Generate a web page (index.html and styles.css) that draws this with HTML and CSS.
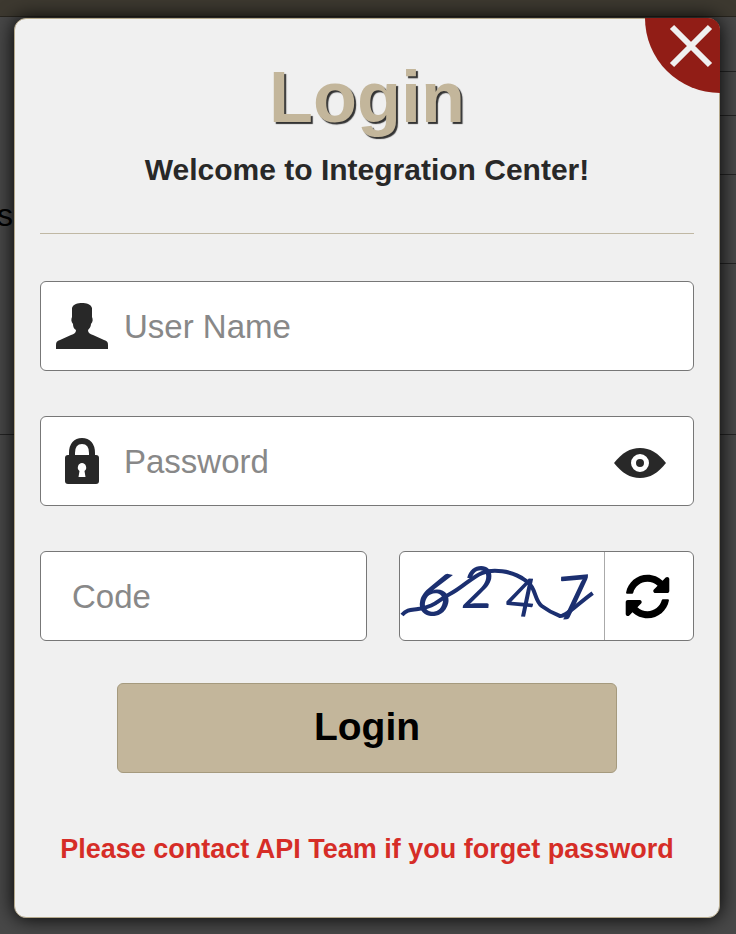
FILE: index.html
```html
<!DOCTYPE html>
<html lang="en">
<head>
<meta charset="utf-8">
<meta name="viewport" content="width=device-width, initial-scale=1">
<title>Login</title>
<link rel="stylesheet" href="styles.css">
</head>
<body>
<div class="page" aria-hidden="true">
  <div class="page-bar"></div>
  <div class="page-body">
    <div class="page-text">s</div>
    <div class="page-rows">
      <div class="row row-title"></div>
      <div class="row row-short"></div>
      <div class="row row-mid"></div>
      <div class="row row-tall"></div>
    </div>
  </div>
</div>
<main class="modal" role="dialog" aria-labelledby="title">
  <button class="close" type="button" aria-label="Close">
    <svg viewBox="0 0 75 75"><path d="M27 9 65 47M65 9 27 47" fill="none" stroke="#f0f0f0" stroke-width="6"/></svg>
  </button>
  <h1 class="title" id="title">Login</h1>
  <p class="welcome">Welcome to Integration Center!</p>
  <hr class="rule">
  <form class="form">
    <div class="field">
      <label class="icon" for="user">
        <svg width="52" height="46" viewBox="0 0 52 46" role="img" aria-label="User Name"><path fill="#282828" d="M26 0c4 0 9 1 10 5v9c1 2 1 5-1 7 0 3-2 5-3 6 0 3 2 4 5 5l11 5c3 1 4 2 4 5v4H0v-4c0-3 1-4 4-5l11-5c3-1 5-2 5-5-2-1-3-3-3-6-2-2-2-5-1-7V5c1-4 6-5 10-5z"/></svg>
      </label>
      <input class="input" id="user" type="text" placeholder="User Name">
    </div>
    <div class="field">
      <label class="icon" for="password">
        <svg width="34" height="46" viewBox="0 0 34 46" role="img" aria-label="Password"><path d="M7 19v-4C7 7 11 3 17 3s10 4 10 12v4" fill="none" stroke="#282828" stroke-width="6"/><rect y="17" width="34" height="29" rx="3" fill="#282828"/><path d="M17 25a4.500 4.500 0 0 1 2.500 8l1 6h-7l1-6A4.500 4.500 0 0 1 17 25z" fill="#fff"/></svg>
      </label>
      <input class="input" id="password" type="password" placeholder="Password">
      <button class="eye" type="button" aria-label="Show password">
        <svg width="52" height="30" viewBox="0 0 52 30"><path d="M0 15C8 5 16 0 26 0s18 5 26 15C44 25 36 30 26 30S8 25 0 15z" fill="#282828"/><circle cx="26" cy="15" r="6.500" fill="#282828" stroke="#fff" stroke-width="5"/></svg>
      </button>
    </div>
    <div class="code-row">
      <div class="field field-code">
        <input class="input" type="text" placeholder="Code" aria-label="Code">
      </div>
      <div class="field captcha">
        <svg class="captcha-image" viewBox="0 0 204 88" role="img" aria-label="6247">
          <g class="digits">
            <text x="14" y="60" font-size="62" rotate="12">6</text>
            <text x="61" y="56" font-size="58" rotate="0">2</text>
            <text x="104" y="63" font-size="54" rotate="5">4</text>
            <text x="158" y="68" font-size="60" rotate="-5">7</text>
          </g>
          <path d="M2 63C7 57 12 58 18 57C35 55 38 48 50 42C62 36 72 25 82 21C92 17 112 18 125 28C137 35 134 48 142 54Q150 60 160 64C166 65 179 51 193 41" fill="none" stroke="#1b2f70" stroke-width="4"/>
        </svg>
        <button class="refresh" type="button" aria-label="Refresh code">
          <svg width="45" height="45" viewBox="0 0 512 512"><path d="M370.720 133.280C339.458 104.008 298.888 87.962 255.848 88c-77.458.068-144.328 53.178-162.791 126.850-1.344 5.363-6.122 9.150-11.651 9.150H24.103c-7.498 0-13.194-6.807-11.807-14.176C33.933 94.924 134.813 8 256 8c66.448 0 126.791 26.136 171.315 68.685L463.030 40.970C478.149 25.851 504 36.559 504 57.941V192c0 13.255-10.745 24-24 24H345.941c-21.382 0-32.090-25.851-16.971-40.971l41.750-41.749zM32 296h134.059c21.382 0 32.090 25.851 16.971 40.971l-41.750 41.750c31.262 29.273 71.835 45.319 114.876 45.280 77.418-.07 144.315-53.144 162.787-126.849 1.344-5.363 6.122-9.150 11.651-9.150h57.304c7.498 0 13.194 6.807 11.807 14.176C478.067 417.076 377.187 504 256 504c-66.448 0-126.791-26.136-171.315-68.685L48.970 471.030C33.851 486.149 8 475.441 8 454.059V320c0-13.255 10.745-24 24-24z"/></svg>
        </button>
      </div>
    </div>
    <button class="submit" type="submit">Login</button>
  </form>
  <p class="notice">Please contact API Team if you forget password</p>
</main>
</body>
</html>
```
FILE: styles.css
```css
* {
  box-sizing: border-box;
}

body {
  display: grid;
  grid-template-columns: minmax(0, 1fr);
  min-height: 100vh;
  margin: 0;
  background: #484848;
  font-family: "Liberation Sans", Arial, sans-serif;
}

.page,
.modal {
  grid-area: 1 / 1;
}

.page-bar {
  height: 17px;
  background: #3d3930;
  border-bottom: 1px solid #28251e;
}

.page-body {
  display: flex;
  justify-content: space-between;
  height: 418px;
  border-bottom: 1px solid #242424;
}

.page-text {
  display: flex;
  justify-content: flex-end;
  width: 13px;
  padding-top: 180px;
  font-size: 32px;
  line-height: 36px;
}

.page-rows {
  width: 50%;
}

.row {
  border-bottom: 1px solid #242424;
}

.row-title {
  height: 55px;
}

.row-short {
  height: 44px;
}

.row-mid {
  height: 59px;
}

.row-tall {
  height: 89px;
}

.modal {
  position: relative;
  align-self: start;
  margin: 18px 16px 16px 14px;
  padding: 41px 25px 50px;
  background: #f0f0f0;
  border: 1px solid #b5a98c;
  border-radius: 12px;
  box-shadow: 0 0 20px #000;
  text-align: center;
}

.close {
  position: absolute;
  top: -1px;
  right: -1px;
  width: 75px;
  height: 75px;
  padding: 0;
  background: #911d16;
  border: 0;
  border-radius: 0 12px 0 75px;
}

.close svg {
  display: block;
}

.title {
  margin: 0;
  color: #c3b69b;
  font-size: 72px;
  line-height: 74px;
  text-shadow: 2px 2px 1px #333;
}

.welcome {
  margin: 18px 0 0;
  color: #282828;
  font-size: 30px;
  font-weight: bold;
  line-height: 36px;
}

.rule {
  margin: 45px 0 47px;
  border: 0;
  border-top: 1px solid #c0b8a4;
}

.form {
  display: flex;
  flex-direction: column;
  gap: 45px;
}

.field {
  display: flex;
  align-items: center;
  min-width: 0;
  height: 90px;
  background: #fff;
  border: 1px solid #777;
  border-radius: 6px;
}

.icon {
  display: flex;
  flex: none;
  justify-content: center;
  width: 83px;
  padding-right: 2px;
}

.icon svg {
  display: block;
}

.input {
  flex: 1;
  min-width: 0;
  height: 100%;
  padding: 2px 0 0;
  background: transparent;
  border: 0;
  outline: 0;
  font: 33px "Liberation Sans", Arial, sans-serif;
}

.input::placeholder {
  color: #888;
}

.eye {
  display: flex;
  margin-right: 27px;
  padding: 4px 0 0;
  background: none;
  border: 0;
}

.code-row {
  display: grid;
  grid-template-columns: minmax(0, 10fr) minmax(0, 9fr);
  gap: 32px;
}

.field-code {
  padding: 0 31px;
}

.captcha-image {
  flex: 1;
  min-width: 0;
  height: 88px;
  overflow: visible;
}

.digits {
  fill: #1b2f70;
  font-family: Lato, sans-serif;
  font-style: italic;
}

.refresh {
  display: flex;
  flex: none;
  align-items: center;
  justify-content: center;
  width: 89px;
  height: 88px;
  padding: 0 4px 0 0;
  background: none;
  border: 0;
  border-left: 1px solid #aaa;
}

.submit {
  align-self: center;
  width: 500px;
  max-width: 100%;
  height: 90px;
  margin-top: -3px;
  padding: 0 0 2px;
  background: #c3b69b;
  border: 1px solid #a59a7e;
  border-radius: 6px;
  color: #000;
  font: bold 39px "Liberation Sans", Arial, sans-serif;
}

.notice {
  margin: 58px 0 0;
  color: #d62d27;
  font-size: 27px;
  font-weight: bold;
  line-height: 36px;
}
```
